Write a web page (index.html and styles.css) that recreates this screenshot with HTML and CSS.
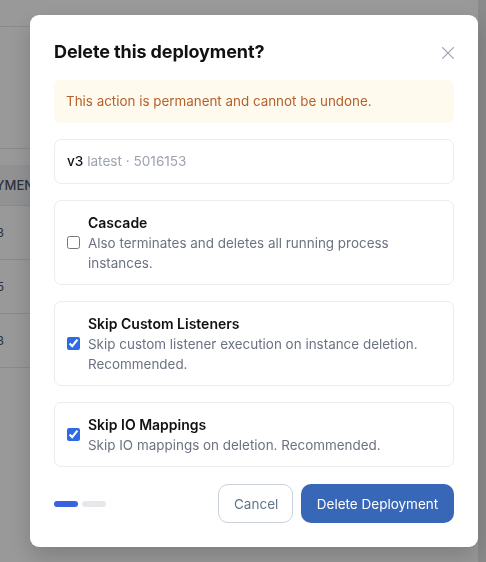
FILE: index.html
```html
<!DOCTYPE html>
<html lang="en">
<head>
    <meta charset="UTF-8">
    <meta name="viewport" content="width=device-width, initial-scale=1.0">
    <title>Deployments</title>
    <link rel="stylesheet" href="styles.css">
</head>
<body>

    <!-- pagina de fundo -->
    <div class="pagina">
        <div class="topo"></div>
        <div class="resumo"></div>
        <div class="tabela">
            <div class="linha-vazia"></div>
            <div class="linha cabecalho"><span>DEPLOYMENTS</span></div>
            <div class="linha"><span>3</span></div>
            <div class="linha"><span>5</span></div>
            <div class="linha"><span>3</span></div>
        </div>
    </div>
    <div class="barra-rolagem"></div>

    <div class="overlay">
        <div class="modal">
            <div class="modal-header">
                <h2>Delete this deployment?</h2>
                <button class="fechar" aria-label="Close">
                    <svg width="12" height="12" viewBox="0 0 12 12" fill="none" stroke="#9ca3af" stroke-width="1.2" stroke-linecap="round">
                        <path d="M0.6 0.6 L11.4 11.4 M11.4 0.6 L0.6 11.4"/>
                    </svg>
                </button>
            </div>

            <div class="aviso">This action is permanent and cannot be undone.</div>

            <div class="versao"><b>v3</b> <span>latest · 5016153</span></div>

            <label class="opcao">
                <input type="checkbox">
                <div class="opcao-texto">
                    <strong>Cascade</strong>
                    <p>Also terminates and deletes all running process instances.</p>
                </div>
            </label>

            <label class="opcao">
                <input type="checkbox" checked>
                <div class="opcao-texto">
                    <strong>Skip Custom Listeners</strong>
                    <p>Skip custom listener execution on instance deletion. Recommended.</p>
                </div>
            </label>

            <label class="opcao">
                <input type="checkbox" checked>
                <div class="opcao-texto">
                    <strong>Skip IO Mappings</strong>
                    <p>Skip IO mappings on deletion. Recommended.</p>
                </div>
            </label>

            <div class="rodape">
                <div class="passos">
                    <span class="passo ativo"></span>
                    <span class="passo"></span>
                </div>
                <div class="botoes">
                    <button class="btn-cancelar">Cancel</button>
                    <button class="btn-deletar">Delete Deployment</button>
                </div>
            </div>
        </div>
    </div>

</body>
</html>
```

FILE: styles.css
```css
/* corpo da pagina */
body {
    margin: 0;
    padding: 0;
    font-family: Inter, "Noto Sans", Arial, sans-serif;
    background-color: #ffffff;
    overflow: hidden;
    width: 100vw;
    height: 100vh;
}

.pagina {
    margin-right: 8px;
    color: #374151;
}

.topo {
    height: 26px;
    border-bottom: 1px solid #e5e7eb;
}

.resumo {
    height: 121px;
    border-bottom: 1px solid #e5e7eb;
}

.linha-vazia {
    height: 16px;
}

.tabela {
    margin-left: -70px;
}

.linha {
    height: 53px;
    border-bottom: 1px solid #e5e7eb;
    display: flex;
    align-items: center;
    font-size: 12px;
    color: #4b5563;
}

.linha span {
    width: 74px;
    text-align: right;
}

.cabecalho {
    height: 40px;
    background-color: #f3f4f6;
    font-weight: 500;
    font-size: 13px;
    color: #4b5563;
}

.cabecalho span {
    width: 121px;
    text-align: right;
    white-space: nowrap;
}

.barra-rolagem {
    position: fixed;
    top: 0;
    right: 0;
    width: 8px;
    height: 100vh;
    background-color: #e8e8e8;
}

.overlay {
    position: fixed;
    inset: 0;
    background-color: rgba(0, 0, 0, 0.4);
    padding: 15px 8px 0 30px;
}

.modal {
    width: 448px;
    box-sizing: border-box;
    background-color: #ffffff;
    border-radius: 9px;
    padding: 24px;
    display: flex;
    flex-direction: column;
    gap: 16px;
    box-shadow: 0 10px 24px rgba(0, 0, 0, 0.18);
}

.modal-header {
    display: flex;
    justify-content: space-between;
    align-items: center;
    height: 25px;
}

h2 {
    margin: 0;
    font-size: 18px;
    font-weight: 650;
    color: #111111;
    letter-spacing: -0.1px;
}

.fechar {
    border: none;
    background: none;
    padding: 0;
    width: 12px;
    height: 12px;
    display: flex;
    margin-top: 2px;
}

.aviso {
    background-color: #fefaed;
    color: #b5612d;
    font-size: 13.4px;
    line-height: 19px;
    padding: 12px;
    border-radius: 6px;
}

.versao {
    border: 1px solid #ececec;
    border-radius: 7px;
    padding: 12px;
    font-size: 13.6px;
    line-height: 19px;
}

.versao b {
    font-weight: 500;
    color: #111111;
}

.versao span {
    color: #9ca3af;
}

.opcao {
    display: flex;
    align-items: center;
    gap: 8px;
    border: 1px solid #ececec;
    border-radius: 7px;
    padding: 11.5px 12px;
}

.opcao input {
    margin: 0;
    width: 13px;
    height: 13px;
    flex-shrink: 0;
    accent-color: #2f6ae6;
}

.opcao-texto strong {
    display: block;
    font-size: 14px;
    font-weight: 600;
    line-height: 20px;
    color: #111111;
}

.opcao-texto p {
    margin: 0;
    font-size: 13.45px;
    line-height: 20px;
    color: #6b7280;
}

.rodape {
    display: flex;
    justify-content: space-between;
    align-items: center;
    margin-top: 1px;
}

.passos {
    display: flex;
    gap: 4px;
}

.passo {
    width: 24px;
    height: 6px;
    border-radius: 3px;
    background-color: #e5e7eb;
}

.passo.ativo {
    background-color: #3a62e0;
}

.botoes {
    display: flex;
    gap: 8px;
}

.btn-cancelar,
.btn-deletar {
    font-family: inherit;
    font-size: 13.5px;
    height: 39px;
    border-radius: 10px;
    padding: 0 15px;
    white-space: nowrap;
}

.btn-cancelar {
    background-color: #ffffff;
    border: 1px solid #cbd2dc;
    color: #64748b;
    width: 75px;
}

.btn-deletar {
    background-color: #3867b8;
    border: none;
    color: #ffffff;
    width: 153px;
}
```
